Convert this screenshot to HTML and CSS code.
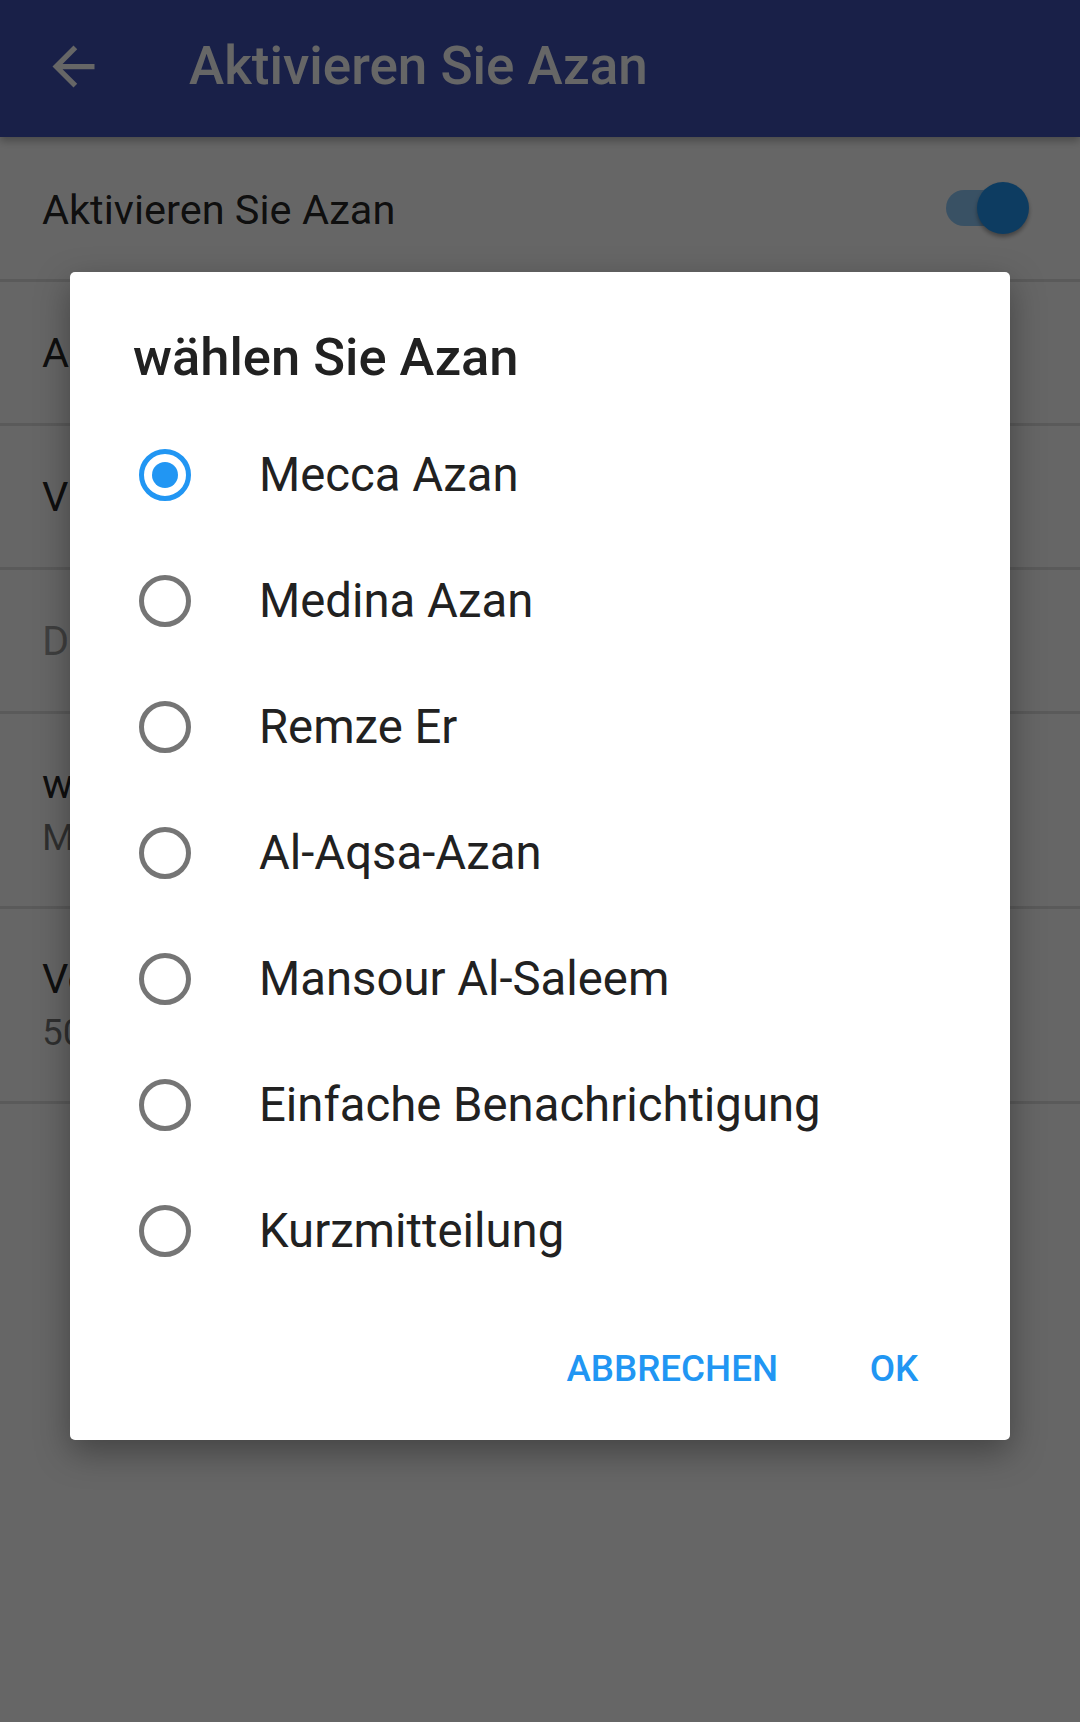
FILE: index.html
```html
<!DOCTYPE html>
<html lang="de">
<head>
<meta charset="utf-8">
<title>Aktivieren Sie Azan</title>
<link rel="stylesheet" href="styles.css">
</head>
<body>
<div class="screen">
  <header class="toolbar">
    <svg class="back" viewBox="0 0 24 24" aria-hidden="true"><path d="M20 11H7.83l5.59-5.59L12 4l-8 8 8 8 1.41-1.41L7.83 13H20v-2z"/></svg>
    <h1 class="toolbar-title">Aktivieren Sie Azan</h1>
  </header>
  <main class="prefs">
    <div class="pref pref-main">
      <span class="pref-title">Aktivieren Sie Azan</span>
      <span class="switch"><span class="track"></span><span class="thumb"></span></span>
    </div>
    <div class="pref"><span class="pref-title">Azan</span></div>
    <div class="pref"><span class="pref-title">Vibrieren</span></div>
    <div class="pref"><span class="pref-title disabled">Dauer</span></div>
    <div class="pref pref-two">
      <span class="pref-title">wählen Sie Azan</span>
      <span class="pref-summary">Mecca Azan</span>
    </div>
    <div class="pref pref-two">
      <span class="pref-title">Volumen</span>
      <span class="pref-summary">50%</span>
    </div>
  </main>
</div>
<div class="scrim">
  <div class="dialog">
    <h2 class="dialog-title">wählen Sie Azan</h2>
    <ul class="options">
      <li class="option"><span class="radio checked"></span><span class="option-label">Mecca Azan</span></li>
      <li class="option"><span class="radio"></span><span class="option-label">Medina Azan</span></li>
      <li class="option"><span class="radio"></span><span class="option-label">Remze Er</span></li>
      <li class="option"><span class="radio"></span><span class="option-label">Al-Aqsa-Azan</span></li>
      <li class="option"><span class="radio"></span><span class="option-label">Mansour Al-Saleem</span></li>
      <li class="option"><span class="radio"></span><span class="option-label">Einfache Benachrichtigung</span></li>
      <li class="option"><span class="radio"></span><span class="option-label">Kurzmitteilung</span></li>
    </ul>
    <div class="actions">
      <button class="btn btn-cancel">ABBRECHEN</button>
      <button class="btn btn-ok">OK</button>
    </div>
  </div>
</div>
</body>
</html>
```

FILE: styles.css
```css
* { box-sizing: border-box; }

html, body {
  margin: 0;
  padding: 0;
}

body {
  width: 1080px;
  height: 1722px;
  overflow: hidden;
  background: #ffffff;
  font-family: Roboto, "Noto Sans", "Liberation Sans", sans-serif;
  position: relative;
}

.screen {
  width: 1080px;
  height: 1722px;
  background: #ffffff;
}

.toolbar {
  height: 137px;
  background: #3f51b5;
  display: flex;
  align-items: center;
  padding-bottom: 5px;
  box-shadow: 0 4px 8px rgba(0, 0, 0, 0.28);
  position: relative;
  z-index: 1;
}

.back {
  width: 63px;
  height: 63px;
  margin-left: 42px;
  fill: #ffffff;
  flex: none;
}

.toolbar-title {
  margin: 0 0 0 84px;
  font-size: 53px;
  font-weight: 500;
  color: #ffffff;
  line-height: 64px;
}

.prefs {
  display: flex;
  flex-direction: column;
}

.pref {
  height: 144px;
  border-bottom: 3px solid #e0e0e0;
  padding: 0 51px 0 42px;
  display: flex;
  align-items: center;
}

.pref-main {
  height: 145px;
  justify-content: space-between;
  padding-top: 4px;
}

.pref-two {
  height: 195px;
  flex-direction: column;
  align-items: flex-start;
  justify-content: center;
  padding-top: 2px;
}

.pref-title {
  font-size: 41.5px;
  color: rgba(0, 0, 0, 0.87);
  line-height: 54px;
  white-space: nowrap;
}

.pref-title.disabled {
  color: rgba(0, 0, 0, 0.38);
}

.pref-summary {
  font-size: 37px;
  color: rgba(0, 0, 0, 0.54);
  line-height: 54px;
}

.switch {
  position: relative;
  width: 83px;
  height: 52px;
  flex: none;
  margin-top: -4px;
}

.switch .track {
  position: absolute;
  left: 0;
  top: 8px;
  width: 74px;
  height: 36px;
  border-radius: 18px;
  background: rgba(33, 150, 243, 0.5);
}

.switch .thumb {
  position: absolute;
  right: 0;
  top: 0;
  width: 52px;
  height: 52px;
  border-radius: 50%;
  background: #2196f3;
  box-shadow: 0 3px 4px rgba(0, 0, 0, 0.35);
}

.scrim {
  position: absolute;
  inset: 0;
  background: rgba(0, 0, 0, 0.6);
  z-index: 5;
  display: flex;
  justify-content: center;
  align-items: flex-start;
  padding-top: 272px;
}

.dialog {
  width: 940px;
  height: 1168px;
  background: #ffffff;
  border-radius: 5px;
  box-shadow: 0 12px 34px rgba(0, 0, 0, 0.35);
  padding-top: 53px;
  display: flex;
  flex-direction: column;
}

.dialog-title {
  margin: 0;
  padding-left: 63px;
  font-size: 52.5px;
  font-weight: 500;
  line-height: 64px;
  color: #212121;
}

.options {
  list-style: none;
  margin: 23px 0 0;
  padding: 0;
}

.option {
  height: 126px;
  display: flex;
  align-items: center;
  padding-left: 69px;
}

.radio {
  width: 52px;
  height: 52px;
  border-radius: 50%;
  border: 5px solid #757575;
  flex: none;
  display: flex;
  align-items: center;
  justify-content: center;
}

.radio.checked {
  border-color: #2196f3;
}

.radio.checked::after {
  content: "";
  width: 26px;
  height: 26px;
  border-radius: 50%;
  background: #2196f3;
}

.option-label {
  margin-left: 68px;
  font-size: 47.25px;
  color: #212121;
  line-height: 56px;
  white-space: nowrap;
}

.actions {
  margin-top: 27px;
  display: flex;
  justify-content: flex-end;
  gap: 11px;
  padding-right: 32px;
}

.btn {
  height: 94px;
  min-width: 168px;
  padding: 0 21px;
  border: none;
  background: transparent;
  font-family: Roboto, "Noto Sans", "Liberation Sans", sans-serif;
  font-size: 36.75px;
  font-weight: 500;
  color: #2196f3;
  text-align: center;
}
```
